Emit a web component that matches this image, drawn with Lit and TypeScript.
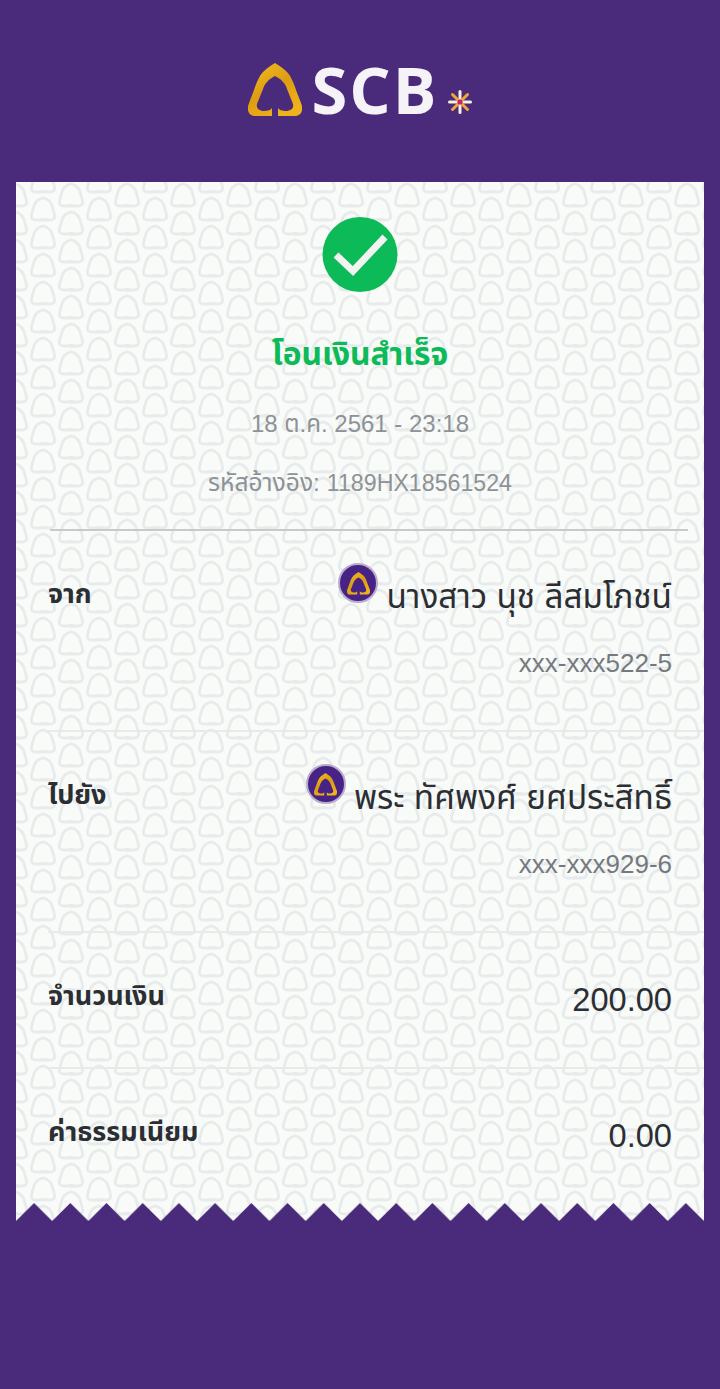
import { LitElement, html, css } from "lit";
import { customElement } from "lit/decorators.js";

const shape = (x: number, y: number) =>
  `<path transform='translate(${x} ${y})' d='M11 21 L11 23 L5 23 C2 23 0.2 21.6 0.4 19 C0.6 16 1.8 13.5 2.6 10 C3.6 5.5 7 2 12 0.8 C17 2 20.4 5.5 21.4 10 C22.2 13.5 23.4 16 23.6 19 C23.8 21.6 22 23 19 23 L13 23 L13 21' fill='none' stroke='%23e7ebeb' stroke-width='2.8' stroke-linejoin='round'/>`;
const tile =
  `<svg xmlns='http://www.w3.org/2000/svg' width='56' height='28'>` +
  [[15, 15], [15, -13], [-41, 15], [-41, -13], [43, 1], [43, 29], [43, -27], [-13, 1], [-13, 29]]
    .map(([x, y]) => shape(x, y))
    .join("") +
  `</svg>`;
const tileUrl = `url("data:image/svg+xml,${tile.replace(/</g, "%3C").replace(/>/g, "%3E")}")`;

const emblem = (size: number) => html`
  <svg class="emblem" width=${size} height=${size} viewBox="0 0 54 54" aria-hidden="true">
    <defs>
      <linearGradient id="gold" x1="0" y1="0" x2="0.6" y2="1">
        <stop offset="0" stop-color="#f3c11f"></stop>
        <stop offset="0.55" stop-color="#dd9c12"></stop>
        <stop offset="1" stop-color="#f0b21a"></stop>
      </linearGradient>
    </defs>
    <path
      d="M27 0 C32 3 36 6 39 9 C43 13 45 19 47 24 C49 30 52 37 54 43 C55 49 52 53 47 53 L30 53 L30 45 C31 47 34 48 38 48 C43 48 46 45 45 41 C43 36 41 31 39 26 C37 20 33 16 27 13 C21 16 17 20 15 26 C13 31 11 36 9 41 C8 45 11 48 16 48 C20 48 23 47 24 45 L24 53 L7 53 C2 53 -1 49 0 43 C2 37 5 30 7 24 C9 19 11 13 15 9 C18 6 22 3 27 0 Z"
      fill="url(#gold)"
    ></path>
  </svg>
`;

@customElement("app-root")
export class AppRoot extends LitElement {
  static styles = css`
    :host {
      display: block;
      width: 720px;
      height: 1389px;
      background: #4a2a7a;
      font-family: "Liberation Sans", "Noto Sans", "Noto Sans Thai", "Noto Sans CJK SC", sans-serif;
      overflow: hidden;
    }
    .logo {
      height: 182px;
      display: flex;
      justify-content: center;
      align-items: flex-start;
      padding-top: 63px;
      box-sizing: border-box;
      gap: 10px;
      color: #f5f3f8;
    }
    .logo .emblem { flex: none; }
    .word {
      font-family: "Open Sans", sans-serif;
      font-size: 65px;
      line-height: 52px;
      font-weight: 700;
      letter-spacing: 2px;
    }
    .star { margin: 27px 0 0 0; }
    .card {
      position: relative;
      margin: 0 16px;
      height: 1039px;
      background-color: #f8fbf8;
      background-image: var(--tile);
    }
    .head {
      display: flex;
      flex-direction: column;
      align-items: center;
      padding-top: 35px;
    }
    .ok { display: block; }
    .title {
      margin-top: 37px;
      font-size: 31.7px;
      line-height: 48px;
      font-weight: 700;
      color: #0cba57;
    }
    .meta {
      font-size: 24px;
      line-height: 36px;
      color: #8e9296;
    }
    .date { margin-top: 28px; }
    .ref { margin-top: 23px; font-size: 24.6px; }
    .ref-no { font-size: 23.2px; }
    .rule {
      height: 2px;
      margin: 28px 16px 0 34px;
      background: #c6cbca;
    }
    .row {
      display: flex;
      justify-content: space-between;
      align-items: flex-start;
      margin-left: 32px;
      padding-right: 32px;
      border-bottom: 2px solid #e6eae9;
      box-sizing: border-box;
    }
    .party { height: 201px; }
    .money { height: 136px; }
    .row.last { border-bottom: 0; }
    .label {
      font-size: 27px;
      line-height: 40px;
      font-weight: 700;
      color: #2b2e33;
      margin-top: 43px;
    }
    .party:first-of-type .label { margin-top: 44px; }
    .right { text-align: right; }
    .name {
      display: flex;
      justify-content: flex-end;
      align-items: flex-start;
      gap: 8px;
      margin-top: 32px;
      font-size: 33.3px;
      line-height: 68px;
      color: #2b2e33;
    }
    .badge {
      flex: none;
      width: 40px;
      height: 40px;
      box-sizing: border-box;
      border-radius: 50%;
      background: #472386;
      border: 2px solid #b9adcb;
      display: flex;
      align-items: center;
      justify-content: center;
    }
    .acct {
      font-size: 26px;
      line-height: 36px;
      color: #75797e;
      margin-top: 14px;
    }
    .amount {
      font-size: 32.6px;
      line-height: 40px;
      color: #2b2e33;
      margin-top: 47px;
    }
    .zig {
      position: absolute;
      left: 0;
      bottom: 0;
      display: block;
    }
  `;

  render() {
    return html`
      <div class="logo">
        ${emblem(54)}
        <span class="word">SCB</span>
        <svg class="star" width="24" height="24" viewBox="0 0 24 24" aria-hidden="true">
          <g stroke-width="3" stroke-linecap="round">
            <path d="M12 1.5V22.5" stroke="#f6efe2"></path>
            <path d="M1.5 12H22.5" stroke="#f6efe2"></path>
            <path d="M4.5 4.5L19.5 19.5" stroke="#f0a53a"></path>
            <path d="M19.5 4.5L4.5 19.5" stroke="#f0a53a"></path>
          </g>
          <circle cx="12" cy="12" r="2.6" fill="#c2256e"></circle>
        </svg>
      </div>
      <div class="card" style=${`--tile:${tileUrl}`}>
        <div class="head">
          <svg class="ok" width="76" height="76" viewBox="0 0 76 76" aria-hidden="true">
            <circle cx="38" cy="37.5" r="37.5" fill="#0cba57"></circle>
            <path d="M14 38 L31 54 L63 20" fill="none" stroke="#f2f4f2" stroke-width="7"></path>
          </svg>
          <div class="title">โอนเงินสำเร็จ</div>
          <div class="meta date">18 ต.ค. 2561 - 23:18</div>
          <div class="meta ref">รหัสอ้างอิง: <span class="ref-no">1189HX18561524</span></div>
        </div>
        <div class="rule"></div>
        <div class="row party">
          <div class="label">จาก</div>
          <div class="right">
            <div class="name"><span class="badge">${emblem(23)}</span><span>นางสาว นุช ลีสมโภชน์</span></div>
            <div class="acct">xxx-xxx522-5</div>
          </div>
        </div>
        <div class="row party">
          <div class="label">ไปยัง</div>
          <div class="right">
            <div class="name"><span class="badge">${emblem(23)}</span><span>พระ ทัศพงศ์ ยศประสิทธิ์</span></div>
            <div class="acct">xxx-xxx929-6</div>
          </div>
        </div>
        <div class="row money">
          <div class="label">จำนวนเงิน</div>
          <div class="amount">200.00</div>
        </div>
        <div class="row money last">
          <div class="label">ค่าธรรมเนียม</div>
          <div class="amount">0.00</div>
        </div>
        <svg class="zig" width="688" height="18" viewBox="0 0 688 18" aria-hidden="true">
          <defs>
            <pattern id="teeth" width="36.21" height="18" patternUnits="userSpaceOnUse">
              <path d="M0 18 L18.1 0 L36.21 18 Z" fill="#4a2a7a"></path>
            </pattern>
          </defs>
          <rect width="688" height="18" fill="url(#teeth)"></rect>
        </svg>
      </div>
    `;
  }
}
